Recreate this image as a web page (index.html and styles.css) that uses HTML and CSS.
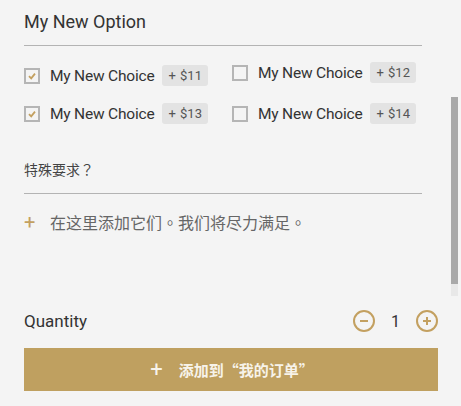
FILE: index.html
```html
<!DOCTYPE html>
<html lang="zh-TW">
<head>
<meta charset="utf-8">
<link rel="stylesheet" href="styles.css">
</head>
<body>
<div class="panel">
  <div class="scroll">
    <h2 class="title" lang="en">My New Option</h2>
    <div class="rule"></div>
    <div class="options" lang="en">
      <label class="opt"><span class="box checked"><svg viewBox="0 0 10 10" width="10" height="10"><path d="M2 5.2 L4.2 7.4 L8 2.6" fill="none" stroke="#c3a060" stroke-width="1.8"/></svg></span><span class="name">My New Choice</span><span class="price">+ $11</span></label>
      <label class="opt up"><span class="box"></span><span class="name">My New Choice</span><span class="price">+ $12</span></label>
      <label class="opt"><span class="box checked"><svg viewBox="0 0 10 10" width="10" height="10"><path d="M2 5.2 L4.2 7.4 L8 2.6" fill="none" stroke="#c3a060" stroke-width="1.8"/></svg></span><span class="name">My New Choice</span><span class="price">+ $13</span></label>
      <label class="opt"><span class="box"></span><span class="name">My New Choice</span><span class="price">+ $14</span></label>
    </div>
    <h3 class="subtitle" lang="zh-TW">特殊要求？</h3>
    <div class="rule rule-sub"></div>
    <div class="hint"><span class="hint-plus">+</span><span class="hint-text" lang="zh-TW">在这里添加它们。我们将尽力满足。</span></div>
  </div>
  <div class="scrollbar"><div class="thumb"></div><div class="track-end"></div></div>
  <div class="footer">
    <div class="qty-row">
      <span class="qty-label" lang="en">Quantity</span>
      <div class="stepper">
        <span class="circle"><svg viewBox="0 0 22 22" width="22" height="22"><circle cx="11" cy="11" r="10" fill="none" stroke="#c3a060" stroke-width="2"/><path d="M7 11 H15" stroke="#c3a060" stroke-width="2"/></svg></span>
        <span class="qty">1</span>
        <span class="circle"><svg viewBox="0 0 22 22" width="22" height="22"><circle cx="11" cy="11" r="10" fill="none" stroke="#c3a060" stroke-width="2"/><path d="M7 11 H15 M11 7 V15" stroke="#c3a060" stroke-width="2"/></svg></span>
      </div>
    </div>
    <button class="add"><span class="add-plus">+</span><span class="add-text" lang="zh-TW">添加到“我的订单”</span></button>
  </div>
</div>
</body>
</html>
```
FILE: styles.css
```css
* { box-sizing: border-box; }
html, body { margin: 0; padding: 0; }
body {
  background: #f4f4f4;
  font-family: Roboto, "Noto Sans CJK TC", sans-serif;
  color: #333;
  width: 461px;
  height: 406px;
  overflow: hidden;
}
.panel { position: relative; height: 406px; }
.scroll {
  height: 296px;
  overflow: hidden;
  padding: 10px 39px 0 24px;
}
.title {
  margin: 0;
  font-size: 18px;
  font-weight: 400;
  line-height: 24px;
  color: #333;
}
.rule { height: 1px; background: #b3b3b3; margin-top: 11px; }
.options {
  display: grid;
  grid-template-columns: 208px 1fr;
  row-gap: 17px;
  margin-top: 19px;
}
.opt {
  display: flex;
  align-items: center;
  height: 21px;
}
.opt.up { margin-top: -3px; margin-bottom: 3px; }
.box {
  width: 16px;
  height: 16px;
  border: 2px solid #b5b5b5;
  background: #f4f4f4;
  display: flex;
  align-items: center;
  justify-content: center;
  flex: none;
}
.name {
  margin-left: 10px;
  font-size: 15.5px;
  color: #333;
  letter-spacing: -0.2px;
}
.price {
  margin-left: 8px;
  background: #e3e3e3;
  border-radius: 3px;
  font-size: 13px;
  color: #555;
  height: 21px;
  line-height: 21px;
  padding: 0 6px;
  word-spacing: 1px;
}
.subtitle {
  margin: 34px 0 0;
  font-family: "Noto Sans CJK TC", sans-serif;
  font-size: 14px;
  font-weight: 400;
  line-height: 22px;
  color: #444;
}
.rule-sub { margin-top: 13px; }
.hint {
  display: flex;
  align-items: center;
  margin-top: 17px;
  line-height: 22px;
  color: #666;
}
.hint-text {
  font-family: "Noto Sans CJK TC", sans-serif;
  font-size: 16px;
}
.hint-plus {
  color: #c3a060;
  font-size: 20px;
  width: 26px;
  font-weight: 400;
}
.scrollbar {
  position: absolute;
  left: 451px;
  top: 0;
  width: 7px;
  height: 296px;
}
.thumb {
  position: absolute;
  top: 97px;
  left: 0;
  width: 7px;
  height: 187px;
  background: #a9a9a9;
}
.track-end {
  position: absolute;
  top: 284px;
  left: 0;
  width: 7px;
  height: 12px;
  background: #e8e8e8;
}
.footer {
  padding: 12px 23px 0 24px;
}
.qty-row {
  display: flex;
  justify-content: space-between;
  align-items: center;
  height: 26px;
}
.qty-label { font-size: 17px; color: #333; }
.stepper { display: flex; align-items: center; }
.circle { width: 22px; height: 22px; display: block; }
.circle svg { display: block; }
.qty { width: 41px; text-align: center; font-size: 16px; color: #333; }
.add {
  margin-top: 14px;
  width: 100%;
  height: 43px;
  border: 0;
  background: #bfa060;
  color: #f7f3ea;
  font-family: Roboto, "Noto Sans CJK TC", sans-serif;
  display: flex;
  align-items: center;
  justify-content: center;
  padding: 0 0 0 2px;
}
.add-text {
  font-family: "Noto Sans CJK TC", sans-serif;
  font-size: 15px;
  font-weight: 700;
}
.add-plus { font-size: 22px; font-weight: 400; margin-right: 16px; }
```
